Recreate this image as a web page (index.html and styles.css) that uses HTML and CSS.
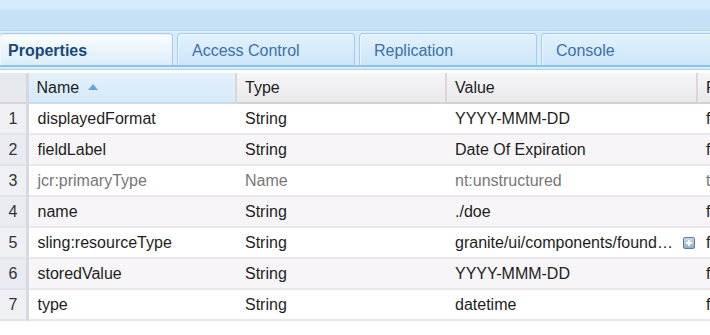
FILE: index.html
```html
<!DOCTYPE html>
<html lang="en">
<head>
    <meta charset="UTF-8">
    <title>Properties</title>
    <link rel="stylesheet" href="styles.css">
</head>
<body>
    <div class="topbar"></div>

    <div class="tabstrip">
        <div class="tab active">Properties</div>
        <div class="tab">Access Control</div>
        <div class="tab">Replication</div>
        <div class="tab last">Console</div>
    </div>

    <table class="grid">
        <colgroup>
            <col class="c-num">
            <col class="c-name">
            <col class="c-type">
            <col class="c-value">
            <col class="c-extra">
        </colgroup>
        <thead>
            <tr>
                <th class="num"></th>
                <th class="sorted">Name <span class="arrow"></span></th>
                <th>Type</th>
                <th>Value</th>
                <th>Protected</th>
            </tr>
        </thead>
        <tbody>
            <tr>
                <td class="num">1</td>
                <td>displayedFormat</td>
                <td>String</td>
                <td>YYYY-MMM-DD</td>
                <td>false</td>
            </tr>
            <tr>
                <td class="num">2</td>
                <td>fieldLabel</td>
                <td>String</td>
                <td>Date Of Expiration</td>
                <td>false</td>
            </tr>
            <tr class="protected">
                <td class="num">3</td>
                <td>jcr:primaryType</td>
                <td>Name</td>
                <td>nt:unstructured</td>
                <td>true</td>
            </tr>
            <tr>
                <td class="num">4</td>
                <td>name</td>
                <td>String</td>
                <td>./doe</td>
                <td>false</td>
            </tr>
            <tr>
                <td class="num">5</td>
                <td>sling:resourceType</td>
                <td>String</td>
                <td>
                    <div class="value-wrap">
                        <span class="ellipsis">granite/ui/components/foundation/form/datepicker</span>
                        <span class="expand"></span>
                    </div>
                </td>
                <td>false</td>
            </tr>
            <tr>
                <td class="num">6</td>
                <td>storedValue</td>
                <td>String</td>
                <td>YYYY-MMM-DD</td>
                <td>false</td>
            </tr>
            <tr>
                <td class="num">7</td>
                <td>type</td>
                <td>String</td>
                <td>datetime</td>
                <td>false</td>
            </tr>
        </tbody>
    </table>
</body>
</html>
```

FILE: styles.css
```css
body {
    margin: 0;
    font-family: 'Liberation Sans', Arial, sans-serif;
    font-size: 16px;
    color: #1e1e1e;
    background: #fff;
    overflow: hidden;
    width: 710px;
}

.topbar {
    height: 30px;
    background: linear-gradient(to bottom, #d6ebfb 0, #d6ebfb 9px, #c5e0f7 10px, #c7e2f7 29px);
    border-bottom: 1px solid #b3d7f3;
}

.tabstrip {
    display: flex;
    gap: 4px;
    height: 32px;
    padding-top: 1px;
    background: #d7ebfa;
    border-top: 1px solid #e6f3fd;
    border-bottom: 2px solid #8fc3ec;
    box-shadow: 0 2px 0 #d8ecfb, 0 3px 0 #a9d2f1;
    margin-bottom: 6px;
}

.tab {
    flex: 0 0 178px;
    box-sizing: border-box;
    height: 32px;
    padding: 8px 0 0 14px;
    border: 1px solid #a3cdef;
    border-bottom: none;
    border-radius: 4px 4px 0 0;
    background: linear-gradient(to bottom, #e3f2fd, #cbe5f8);
    box-shadow: inset 1px 1px 0 #f0f8fe;
    color: #3b72aa;
}

.tab.active {
    flex-basis: 173px;
    padding-left: 8px;
    border-left: none;
    background: linear-gradient(to bottom, #fbfdff, #dbedfb);
    color: #17497d;
    font-weight: bold;
}

.tab.last {
    flex-basis: 180px;
}

.grid {
    border-collapse: collapse;
    table-layout: fixed;
    width: 800px;
}

.c-num { width: 27px; }
.c-name { width: 209px; }
.c-type { width: 210px; }
.c-value { width: 251px; }
.c-extra { width: 103px; }

.grid th {
    height: 29px;
    padding: 0 0 0 8px;
    text-align: left;
    font-weight: normal;
    white-space: nowrap;
    overflow: hidden;
    background: linear-gradient(to bottom, #f6f6f8, #e9e9ed);
    border-left: 2px solid #dcd6da;
    border-bottom: 2px solid #d9d1d5;
}

.grid th.num {
    padding: 0;
    border-left: none;
    border-right: 3px solid #d3d8e1;
    background: #e7e9ee;
}

.grid th.sorted {
    border-left: none;
    background: linear-gradient(to bottom, #e4f1fb, #d6e9f8);
    border-bottom-color: #c3dcf0;
}

.arrow {
    display: inline-block;
    width: 0;
    height: 0;
    margin-left: 4px;
    vertical-align: 3px;
    border-left: 5px solid transparent;
    border-right: 5px solid transparent;
    border-bottom: 6px solid #5ea8e2;
}

.grid td {
    height: 29px;
    padding: 0 0 0 9px;
    white-space: nowrap;
    overflow: hidden;
    border-bottom: 2px solid #ebe6ea;
}

.grid tbody tr:nth-child(even) td {
    background: #f7f5f7;
}

.grid td.num {
    padding: 0 8px 0 0;
    text-align: right;
    color: #333;
    background: #eef0f4;
    border-right: 3px solid #d6dae3;
    border-bottom-color: #e2e4ea;
}

.grid tbody tr:nth-child(even) td.num {
    background: #e9ebf0;
}

.grid tr.protected td {
    color: #777;
}

.grid tr.protected td.num {
    color: #333;
}

.value-wrap {
    display: flex;
    align-items: center;
    gap: 6px;
    padding-right: 2px;
}

.ellipsis {
    flex: 1;
    min-width: 0;
    overflow: hidden;
    text-overflow: ellipsis;
}

.expand {
    position: relative;
    flex: 0 0 auto;
    box-sizing: border-box;
    width: 12px;
    height: 12px;
    border: 1px solid #5f7d98;
    border-radius: 2px;
    background: linear-gradient(to bottom, #c9dbea, #8fb0cc);
}

.expand::before,
.expand::after {
    content: '';
    position: absolute;
    background: #fff;
}

.expand::before {
    left: 2px;
    top: 4px;
    width: 6px;
    height: 2px;
}

.expand::after {
    left: 4px;
    top: 2px;
    width: 2px;
    height: 6px;
}
```
